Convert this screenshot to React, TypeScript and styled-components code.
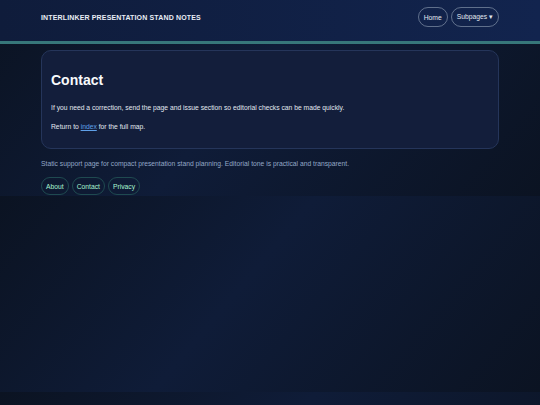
import React from "react";
import styled, { createGlobalStyle } from "styled-components";

const GlobalStyle = createGlobalStyle`
	* {
		box-sizing: border-box;
	}

	body {
		margin: 0;
		padding-bottom: 1px;
		font-family: "Liberation Sans", Arial, sans-serif;
		color: #e2e8f0;
		background: linear-gradient(130deg, #0b1322 0%, #0f1c38 45%, #0b1322 100%);
	}
`;

function App() {
	return (
		<>
			<GlobalStyle />
			<Header>
				<HeaderInner>
					<SiteTitle>Interlinker Presentation Stand Notes</SiteTitle>
					<Nav>
						<NavButton href="#">Home</NavButton>
						<NavButton as="button">Subpages ▾</NavButton>
					</Nav>
				</HeaderInner>
			</Header>
			<Main>
				<Card>
					<Heading>Contact</Heading>
					<Text>
						If you need a correction, send the page and issue section so
						editorial checks can be made quickly.
					</Text>
					<Text>
						Return to <InlineLink href="#">index</InlineLink> for the full map.
					</Text>
				</Card>
				<Footer>
					<FooterNote>
						Static support page for compact presentation stand planning.
						Editorial tone is practical and transparent.
					</FooterNote>
					<FooterLinks>
						<Pill href="#">About</Pill>
						<Pill href="#">Contact</Pill>
						<Pill href="#">Privacy</Pill>
					</FooterLinks>
				</Footer>
			</Main>
		</>
	);
}

const Header = styled.header`
	background: linear-gradient(90deg, #0f1c3b 0%, #12244e 100%);
	border-bottom: 3px solid #37777a;
`;

const HeaderInner = styled.div`
	max-width: 458px;
	margin: 0 auto;
	padding: 7px 0 14px;
	display: flex;
	align-items: center;
	justify-content: space-between;
`;

const SiteTitle = styled.div`
	font-size: 7px;
	font-weight: 700;
	text-transform: uppercase;
	letter-spacing: 0.15px;
	color: #e8edf5;
`;

const Nav = styled.nav`
	display: flex;
	gap: 3px;
`;

const NavButton = styled.a`
	display: inline-flex;
	align-items: center;
	height: 20px;
	padding: 0 5px;
	border: 1px solid rgba(148, 163, 184, 0.6);
	border-radius: 999px;
	background: transparent;
	color: #e2e8f0;
	font-family: inherit;
	font-size: 6.75px;
	text-decoration: none;
`;

const Main = styled.main`
	max-width: 458px;
	margin: 0 auto;
	padding-top: 6px;
`;

const Card = styled.section`
	background: #131e3b;
	border: 1px solid #25355a;
	border-radius: 10px;
	padding: 20px 9px 7px;
`;

const Heading = styled.h1`
	margin: 0 0 14px;
	font-size: 14px;
	line-height: 18px;
	font-weight: 700;
	color: #f8fafc;
`;

const Text = styled.p`
	margin: 0 0 10px;
	font-size: 6.75px;
	line-height: 9px;
	color: #e2e8f0;
`;

const InlineLink = styled.a`
	color: #5fa0e8;
`;

const Footer = styled.footer`
	padding-top: 10px;
`;

const FooterNote = styled.p`
	margin: 0 0 9px;
	font-size: 6.75px;
	line-height: 9px;
	color: #93a7c6;
`;

const FooterLinks = styled.div`
	display: flex;
	gap: 3px;
`;

const Pill = styled.a`
	display: inline-flex;
	align-items: center;
	height: 18px;
	padding: 0 4px;
	border: 1px solid #1f4a50;
	border-radius: 999px;
	color: #a7f3d0;
	font-size: 6.75px;
	text-decoration: none;
`;

export default App;
